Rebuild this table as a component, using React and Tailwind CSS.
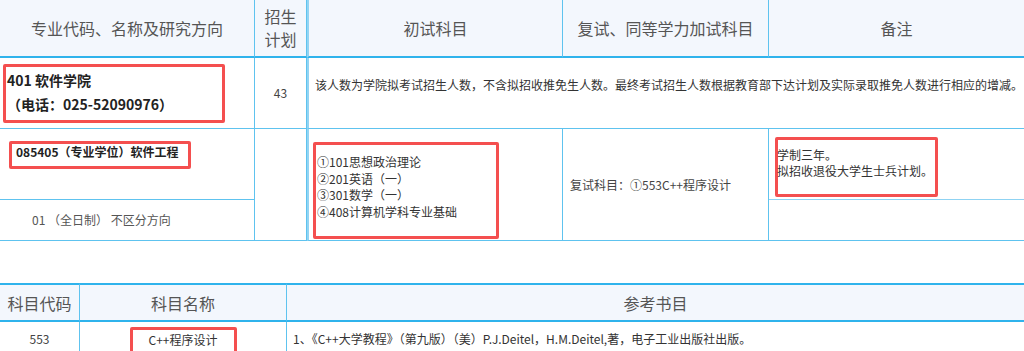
import React from 'react';

const line = 'border-[#5ec3ef]';

export default function App() {
  return (
    <div
      className="w-[1024px] h-[351px] overflow-hidden bg-white text-[#333]"
      style={{ fontFamily: '"Noto Sans CJK SC", "Noto Sans", sans-serif' }}
    >
      <PlanTable />
      <BookTable />
    </div>
  );
}

function Mark({ className = '', children }) {
  return (
    <div className={`border-[3px] border-[#f44f4f] rounded-[2px] ${className}`}>{children}</div>
  );
}

function PlanTable() {
  return (
    <div className="grid grid-cols-[255px_52px_256px_206px_255px] grid-rows-[58px_71px_71px_41px]">
      {/* header */}
      <div className={`bg-[#f3f7fd] border-b-2 border-b-[#2fb3ec] border-r ${line} flex items-center justify-center text-[16px] text-[#555]`}>
        专业代码、名称及研究方向
      </div>
      <div className={`bg-[#f3f7fd] border-b-2 border-b-[#2fb3ec] border-r ${line} flex items-center justify-center text-center text-[16px] leading-[23px] text-[#555]`}>
        招生<br />计划
      </div>
      <div className="bg-[#f3f7fd] border-b-2 border-b-[#2fb3ec] border-l-2 border-l-[#92d4f3] border-r border-r-[#5ec3ef] flex items-center justify-center text-[16px] text-[#555]">
        初试科目
      </div>
      <div className={`bg-[#f3f7fd] border-b-2 border-b-[#2fb3ec] border-r ${line} flex items-center justify-center text-[16px] text-[#555]`}>
        复试、同等学力加试科目
      </div>
      <div className="bg-[#f3f7fd] border-b-2 border-b-[#2fb3ec] flex items-center justify-center text-[16px] text-[#555]">
        备注
      </div>

      {/* college row */}
      <div className={`border-b border-r ${line} pt-[6px] pl-[3px]`}>
        <Mark className="w-[222px] h-[59px] pl-[1px] pt-[1px] text-[14px] font-bold leading-[24px] text-[#222]">
          <div>401 软件学院</div>
          <div>（电话：025-52090976）</div>
        </Mark>
      </div>
      <div className={`border-b border-r ${line} flex items-center justify-center text-[12px] text-[#444]`}>
        43
      </div>
      <div className="col-span-3 border-b border-b-[#5ec3ef] border-l-2 border-l-[#92d4f3] pt-[19px] pl-[6px] text-[12px] leading-[16px] text-[#333]">
        该人数为学院拟考试招生人数，不含拟招收推免生人数。最终考试招生人数根据教育部下达计划及实际录取推免人数进行相应的增减。
      </div>

      {/* major row */}
      <div className={`border-b border-r ${line} pt-[12px] pl-[9px]`}>
        <Mark className="w-[182px] h-[28px] pl-[4px] text-[12px] font-bold leading-[16px] text-[#222]">
          085405（专业学位）软件工程
        </Mark>
      </div>
      <div className={`row-span-2 border-b border-r ${line}`} />
      <div className="row-span-2 border-b border-b-[#5ec3ef] border-l-2 border-l-[#92d4f3] border-r border-r-[#5ec3ef] pt-[13px] pl-[4px]">
        <Mark className="w-[186px] h-[97px] pt-[9px] pl-[1px] text-[12px] leading-[16.5px] text-[#333]">
          <div>①101思想政治理论</div>
          <div>②201英语（一）</div>
          <div>③301数学（一）</div>
          <div>④408计算机学科专业基础</div>
        </Mark>
      </div>
      <div className={`row-span-2 border-b border-r ${line} flex items-center pl-[7px] text-[12px] text-[#444]`}>
        复试科目：①553C++程序设计
      </div>
      <div className="border-b border-b-[#8fd3f3] pt-[8px] pl-[6px]">
        <Mark className="w-[163px] h-[60px] pt-[7px] text-[12px] leading-[16px] text-[#333]">
          <div className="-ml-[1px]">学制三年。</div>
          <div className="-ml-[1px]">拟招收退役大学生士兵计划。</div>
        </Mark>
      </div>

      {/* direction row */}
      <div className={`border-b border-r ${line} flex items-center pl-[32px] text-[12px] text-[#555]`}>
        01 （全日制） 不区分方向
      </div>
      <div className={`border-b ${line}`} />
    </div>
  );
}

function BookTable() {
  return (
    <div className="mt-[42px] grid grid-cols-[80px_207px_1fr] grid-rows-[39px_40px]">
      <div className="bg-[#f3f7fd] border-y-2 border-[#2fb3ec] border-r border-r-[#5ec3ef] flex items-center justify-center text-[16px] text-[#555]">
        科目代码
      </div>
      <div className="bg-[#f3f7fd] border-y-2 border-[#2fb3ec] border-r border-r-[#5ec3ef] flex items-center justify-center text-[16px] text-[#555]">
        科目名称
      </div>
      <div className="bg-[#f3f7fd] border-y-2 border-[#2fb3ec] flex items-center justify-center text-[16px] text-[#555]">
        参考书目
      </div>

      <div className={`border-r ${line} flex justify-center pt-[8px] text-[12px] text-[#444]`}>553</div>
      <div className={`border-r ${line} flex justify-center pt-[5px]`}>
        <Mark className="w-[107px] h-[30px] pt-[2px] text-center text-[12px] leading-[16px] text-[#333]">
          C++程序设计
        </Mark>
      </div>
      <div className="pt-[8px] pl-[6px] text-[12px] text-[#333]">
        1、《C++大学教程》（第九版）（美）P.J.Deitel，H.M.Deitel,著，电子工业出版社出版。
      </div>
    </div>
  );
}
